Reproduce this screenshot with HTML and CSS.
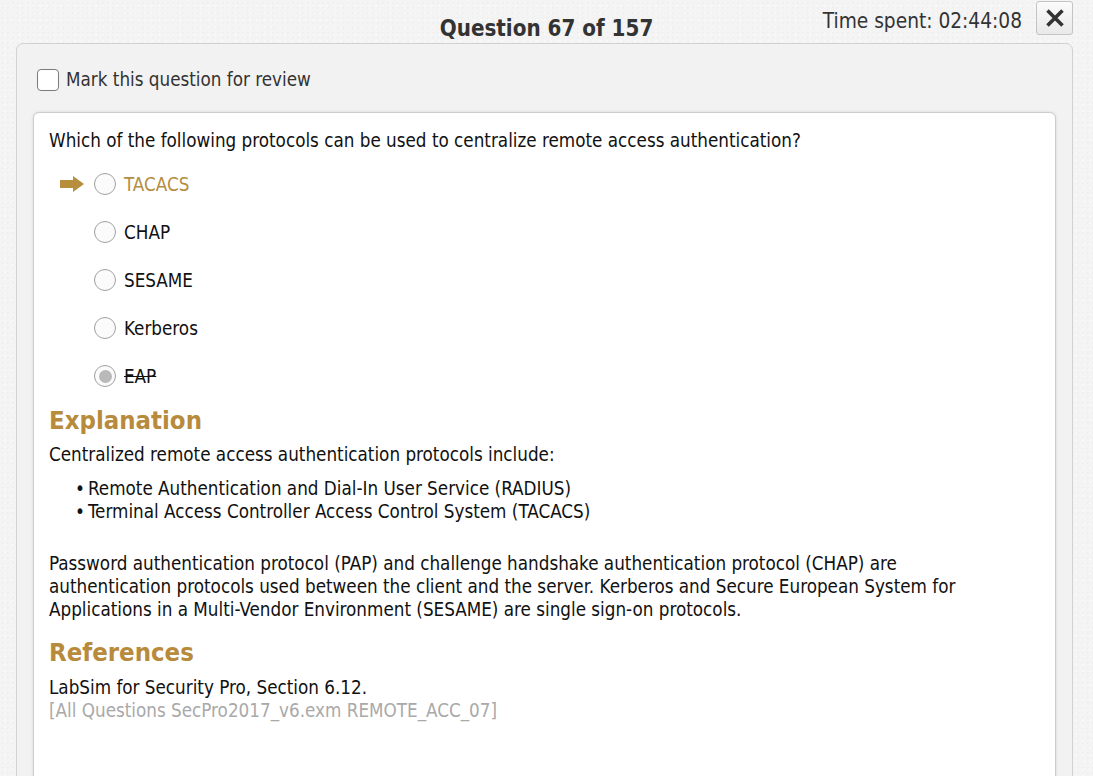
FILE: index.html
```html
<!DOCTYPE html>
<html>
<head>
<meta charset="utf-8">
<title>Question 67 of 157</title>
<link rel="stylesheet" href="styles.css">
</head>
<body>
<header class="topbar">
  <div class="spacer"></div>
  <h1 class="title">Question 67 of 157</h1>
  <div class="tools">
    <span class="time">Time spent: 02:44:08</span>
    <button class="close" aria-label="Close">
      <svg width="20" height="20" viewBox="0 0 20 20"><path d="M2.5 2.5 L17.5 17.5 M17.5 2.5 L2.5 17.5" stroke="#333" stroke-width="3.6" stroke-linecap="butt"/></svg>
    </button>
  </div>
</header>

<main class="panel">
  <label class="review">
    <span class="checkbox"></span>
    <span class="review-text">Mark this question for review</span>
  </label>

  <section class="card">
    <p class="question">Which of the following protocols can be used to centralize remote access authentication?</p>

    <div class="options">
      <div class="option correct">
        <span class="pointer"><svg width="24" height="16" viewBox="0 0 24 16"><path d="M0 4 H13 V0 L24 8 L13 16 V12 H0 Z" fill="#b78e3d"/></svg></span>
        <span class="radio"></span>
        <span class="label">TACACS</span>
      </div>
      <div class="option">
        <span class="pointer"></span>
        <span class="radio"></span>
        <span class="label">CHAP</span>
      </div>
      <div class="option">
        <span class="pointer"></span>
        <span class="radio"></span>
        <span class="label">SESAME</span>
      </div>
      <div class="option">
        <span class="pointer"></span>
        <span class="radio"></span>
        <span class="label">Kerberos</span>
      </div>
      <div class="option chosen">
        <span class="pointer"></span>
        <span class="radio"><span class="dot"></span></span>
        <span class="label struck">EAP</span>
      </div>
    </div>

    <h2 class="heading">Explanation</h2>
    <p class="text">Centralized remote access authentication protocols include:</p>
    <ul class="bullets">
      <li><span class="bullet">•</span>Remote Authentication and Dial-In User Service (RADIUS)</li>
      <li><span class="bullet">•</span>Terminal Access Controller Access Control System (TACACS)</li>
    </ul>
    <p class="text para">Password authentication protocol (PAP) and challenge handshake authentication protocol (CHAP) are<br>authentication protocols used between the client and the server. Kerberos and Secure European System for<br>Applications in a Multi-Vendor Environment (SESAME) are single sign-on protocols.</p>

    <h2 class="heading refs">References</h2>
    <p class="text">LabSim for Security Pro, Section 6.12.</p>
    <p class="text muted">[All Questions SecPro2017_v6.exm REMOTE_ACC_07]</p>
  </section>
</main>
</body>
</html>
```
FILE: styles.css
```css
html, body {
  margin: 0;
  padding: 0;
}
body {
  background-color: #f4f4f4;
  background-image:
    radial-gradient(rgba(0,0,0,0.018) 1px, transparent 1px),
    radial-gradient(rgba(255,255,255,0.5) 1px, transparent 1px);
  background-size: 5px 5px, 7px 7px;
  background-position: 0 0, 2px 3px;
  font-family: "DejaVu Sans Condensed", "DejaVu Sans", sans-serif;
  font-size: 18.7px;
  color: #111;
  height: 776px;
  overflow: hidden;
}

/* top bar */
.topbar {
  display: grid;
  grid-template-columns: 1fr auto 1fr;
  height: 43px;
}
.title {
  margin: 15px 0 0 0;
  font-size: 22.2px;
  line-height: 26px;
  font-weight: bold;
  color: #333;
  align-self: start;
}
.tools {
  display: flex;
  justify-content: flex-end;
  align-items: flex-start;
  padding-top: 1px;
  padding-right: 20px;
}
.time {
  margin-top: 8px;
  line-height: 24px;
  color: #333;
  font-size: 20.7px;
}
.close {
  margin-left: 14px;
  width: 37px;
  height: 34px;
  padding: 0;
  border: 1px solid #c4c4c4;
  border-radius: 3px;
  background: linear-gradient(#fbfbfb, #e9e9e9);
  display: flex;
  align-items: center;
  justify-content: center;
}
.close svg { display: block; }

/* outer panel */
.panel {
  margin: 0 20px 0 16px;
  border: 1px solid #d2d2d2;
  border-radius: 7px;
  background: #f2f2f2;
  padding: 24px 16px 0 16px;
}
.review {
  display: flex;
  align-items: center;
  margin-left: 4px;
  height: 23px;
}
.checkbox {
  width: 20px;
  height: 20px;
  border: 1px solid #7a7a7a;
  border-radius: 4px;
  background: #fff;
  flex: none;
}
.review-text {
  margin-left: 7px;
  color: #333;
  line-height: 23px;
}

/* card */
.card {
  margin-top: 21px;
  background: #fff;
  border: 1px solid #cdcdcd;
  border-radius: 6px;
  box-shadow: 0 0 3px rgba(0,0,0,0.12);
  padding: 16px 15px 0 15px;
  min-height: 700px;
}
.question {
  margin: 0;
  line-height: 23px;
}

.options {
  margin-top: 8px;
}
.option {
  display: flex;
  align-items: center;
  height: 48px;
  padding-left: 11px;
}
.pointer {
  width: 24px;
  height: 16px;
  flex: none;
  margin-right: 10px;
}
.pointer svg { display: block; }
.radio {
  width: 20px;
  height: 20px;
  border: 1px solid #a2a2a2;
  border-radius: 50%;
  background: #fbfbfb;
  flex: none;
  display: flex;
  align-items: center;
  justify-content: center;
}
.dot {
  width: 13px;
  height: 13px;
  border-radius: 50%;
  background: #b9b9b9;
}
.label {
  margin-left: 8px;
  line-height: 23px;
}
.correct .label { color: #b58d42; }
.struck { text-decoration: line-through; }

.heading {
  margin: 5px 0 8px 0;
  font-size: 25.5px;
  line-height: 30px;
  font-weight: bold;
  color: #b88a3c;
}
.heading.refs { margin: 16px 0 9px 0; }

.text {
  margin: 0;
  line-height: 23px;
}
.bullets {
  list-style: none;
  margin: 11px 0 0 0;
  padding: 0 0 0 26px;
}
.bullets li {
  display: flex;
  line-height: 23px;
}
.bullet {
  width: 13px;
  flex: none;
}
.para { margin-top: 29px; }
.muted { color: #a9a9a9; }
```
